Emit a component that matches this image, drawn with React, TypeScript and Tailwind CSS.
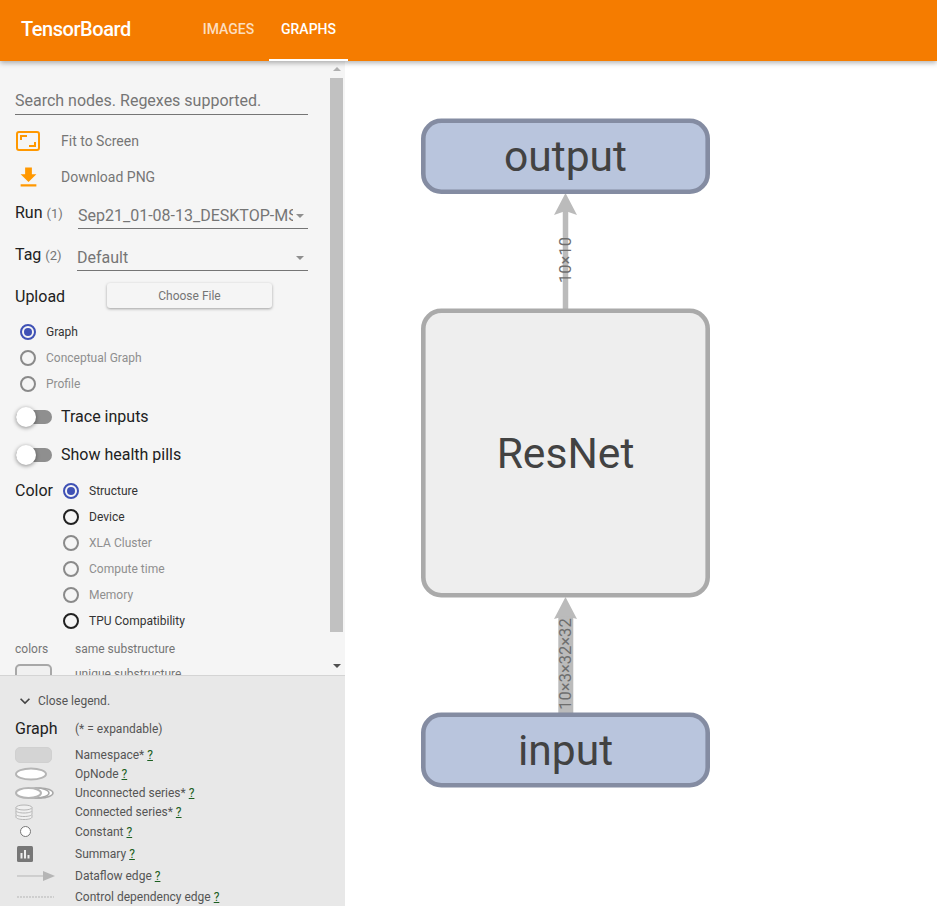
const font = "font-['Roboto',sans-serif]";

const Radio = ({ label, checked, dark, muted }: { label: string; checked?: boolean; dark?: boolean; muted?: boolean }) => (
  <div className="flex h-[26px] items-center">
    <span
      className={`flex h-4 w-4 items-center justify-center rounded-full border-2 ${
        checked ? "border-[#3f51b5]" : dark ? "border-[#212121]" : "border-[#8a8a8a]"
      }`}
    >
      {checked && <span className="h-2 w-2 rounded-full bg-[#3f51b5]" />}
    </span>
    <span className={`ml-[10px] text-xs ${muted ? "text-[#8f8f8f]" : "text-[#333]"}`}>{label}</span>
  </div>
);

const Toggle = ({ label }: { label: string }) => (
  <div className="flex h-[38px] items-center">
    <span className="relative ml-px h-[14px] w-9 rounded-full bg-[#8f8f8f]">
      <span className="absolute left-0 top-[-3px] h-5 w-5 rounded-full bg-white shadow-[0_1px_4px_rgba(0,0,0,0.45)]" />
    </span>
    <span className="ml-[9px] text-base text-[#212121]">{label}</span>
  </div>
);

const Select = ({ label, count, value, left }: { label: string; count: string; value: string; left: string }) => (
  <div className="flex h-[42px] items-start">
    <div className={`flex shrink-0 items-baseline pt-[2px] ${left}`}>
      <span className="text-base text-[#212121]">{label}</span>
      <span className="ml-1 text-[13px] text-[#757575]">{count}</span>
    </div>
    <div className="flex h-[30px] min-w-0 flex-1 items-center border-b border-[#757575] pr-1 pt-1">
      <span className="mr-[3px] min-w-0 flex-1 overflow-hidden whitespace-nowrap text-base text-[#757575]">{value}</span>
      <span className="h-0 w-0 border-x-[4px] border-t-[4px] border-x-transparent border-t-[#8f8f8f]" />
    </div>
  </div>
);

const Help = () => <a className="ml-[3px] text-[#1b5e20] underline">?</a>;

const LegendRow = ({ h, icon, label }: { h: string; icon: React.ReactNode; label: string }) => (
  <div className={`flex items-center ${h}`}>
    <div className="flex w-[60px] shrink-0 items-center">{icon}</div>
    <span className="whitespace-nowrap text-xs text-[#555]">
      {label}
      <Help />
    </span>
  </div>
);

const Node = ({ y, h, label, blue }: { y: number; h: number; label: string; blue?: boolean }) => (
  <g>
    <rect
      x={423.3}
      y={y + 2.3}
      width={284.4}
      height={h - 4.6}
      rx={18}
      fill={blue ? "#b9c5dd" : "#eeeeee"}
      stroke={blue ? "#848ca2" : "#aaaaaa"}
      strokeWidth={4.6}
    />
    <text x={565.5} y={y + h / 2 + 15} textAnchor="middle" fontSize={42.6} fill="#424242">
      {label}
    </text>
  </g>
);

export default function App() {
  return (
    <div className={`flex h-[906px] w-[937px] flex-col overflow-hidden bg-white ${font}`}>
      <header className="relative z-10 flex h-[61px] shrink-0 bg-[#f57c00] shadow-[0_2px_5px_rgba(0,0,0,0.3)]">
        <h1 className="ml-[21px] mt-[17px] w-[170px] text-xl leading-6 font-medium tracking-[-0.45px] text-white">TensorBoard</h1>
        <div className="flex h-[58px] w-[78px] items-center justify-center pr-[3px] text-sm font-medium text-white/75">IMAGES</div>
        <div className="flex h-[61px] w-[79px] items-center justify-center border-b-2 border-white pb-px text-sm font-medium text-white">GRAPHS</div>
      </header>

      <div className="flex min-h-0 flex-1">
        <aside className="flex w-[345px] shrink-0 flex-col bg-[#f5f5f5]">
          <div className="flex h-[614px] shrink-0 overflow-hidden">
            <div className="min-w-0 flex-1 px-[15px]">
              <div className="mt-[26px] flex h-7 w-[293px] items-center border-b border-[#757575] text-base text-[#757575]">
                Search nodes. Regexes supported.
              </div>
              <div className="mt-[8px] flex h-9 items-center text-sm text-[#757575]">
                <svg width="24" height="20" viewBox="0 0 24 20" fill="none" className="ml-px">
                  <rect x="1" y="1" width="22" height="18" rx="2" stroke="#ff9800" strokeWidth="2" />
                  <path d="M5 9V5h6M19 11v4h-6" stroke="#ff9800" strokeWidth="2" />
                </svg>
                <span className="ml-[21px]">Fit to Screen</span>
              </div>
              <div className="flex h-9 items-center text-sm text-[#757575]">
                <svg width="27" height="27" viewBox="0 0 24 24" fill="#ff9800">
                  <path d="M19 9h-4V3H9v6H5l7 7 7-7zM5 18v2h14v-2H5z" />
                </svg>
                <span className="ml-[19px]">Download PNG</span>
              </div>
              <div className="mt-[4px] w-[293px]">
                <Select label="Run" count="(1)" value="Sep21_01-08-13_DESKTOP-MSAJ" left="w-[63px]" />
                <Select label="Tag" count="(2)" value="Default" left="w-[62px]" />
              </div>
              <div className="flex h-[29px] items-start">
                <span className="w-[92px] pt-[2px] text-base text-[#212121]">Upload</span>
                <div className="flex h-[25px] w-[165px] items-center justify-center rounded-[3px] bg-[#f5f5f5] text-xs text-[#757575] shadow-[0_1px_3px_rgba(0,0,0,0.35)]">
                  Choose File
                </div>
              </div>
              <div className="mt-[7px] pl-[5px]">
                <Radio label="Graph" checked />
                <Radio label="Conceptual Graph" muted />
                <Radio label="Profile" muted />
              </div>
              <div className="mt-[1px]">
                <Toggle label="Trace inputs" />
                <Toggle label="Show health pills" />
              </div>
              <div className="mt-[4px] flex">
                <span className="w-[48px] pt-px text-base text-[#212121]">Color</span>
                <div>
                  <Radio label="Structure" checked />
                  <Radio label="Device" dark />
                  <Radio label="XLA Cluster" muted />
                  <Radio label="Compute time" muted />
                  <Radio label="Memory" muted />
                  <Radio label="TPU Compatibility" dark />
                </div>
              </div>
              <div className="mt-[7px] flex h-4 items-center text-xs text-[#757575]">
                <span className="w-[60px]">colors</span>
                <span>same substructure</span>
              </div>
              <div className="mt-[7px] flex text-xs text-[#757575]">
                <span className="h-4 w-[37px] rounded-[5px] border-2 border-[#a8a8a8] bg-[#f0f0f0]" />
                <span className="ml-[23px] pt-[2px]">unique substructure</span>
              </div>
            </div>
            <div className="flex w-[16px] shrink-0 flex-col items-center pl-px pr-[2px]">
              <span className="mt-[6px] h-0 w-0 border-x-[4px] border-b-[4px] border-x-transparent border-b-[#b0b0b0]" />
              <div className="mt-[7px] h-[554px] w-[13px] shrink-0 bg-[#c1c1c1]" />
              <span className="mt-[32px] h-0 w-0 border-x-[4px] border-t-[4px] border-x-transparent border-t-[#505050]" />
            </div>
          </div>

          <div className="min-h-0 flex-1 border-t border-[#d4d4d4] bg-[#e8e8e8] px-[15px]">
            <div className="mt-[16px] flex h-[18px] items-center text-xs text-[#555]">
              <svg width="20" height="20" viewBox="0 0 24 24" fill="#444" className="shrink-0">
                <path d="M16.590 8.590L12 13.170 7.410 8.590 6 10l6 6 6-6z" />
              </svg>
              <span className="ml-[3px]">Close legend.</span>
            </div>
            <div className="mt-[7px] flex h-6 items-center">
              <span className="w-[60px] text-base text-[#212121]">Graph</span>
              <span className="text-xs text-[#555]">(* = expandable)</span>
            </div>
            <div className="mt-[4px]">
              <LegendRow
                h="h-[19px]"
                label="Namespace*"
                icon={<span className="h-4 w-[37px] rounded-[5px] border border-[#d0d0d0] bg-[#d4d4d4]" />}
              />
              <LegendRow
                h="h-[19px]"
                label="OpNode"
                icon={
                  <svg width="32" height="14" viewBox="0 0 32 14">
                    <ellipse cx="16" cy="7" rx="15" ry="5.500" fill="#fff" stroke="#b5b5b5" strokeWidth="2" />
                  </svg>
                }
              />
              <LegendRow
                h="h-[19px]"
                label="Unconnected series*"
                icon={
                  <svg width="39" height="12" viewBox="0 0 39 12">
                    <ellipse cx="25" cy="6" rx="13" ry="5" fill="#fff" stroke="#a8a8a8" strokeWidth="1.500" />
                    <ellipse cx="21" cy="6" rx="13" ry="5" fill="#fff" stroke="#a8a8a8" strokeWidth="1.500" />
                    <ellipse cx="13.500" cy="6" rx="12.500" ry="5" fill="#fff" stroke="#b5b5b5" strokeWidth="2" />
                  </svg>
                }
              />
              <LegendRow
                h="h-[19px]"
                label="Connected series*"
                icon={
                  <svg width="18" height="16" viewBox="0 0 18 16" fill="#f0f0f0" stroke="#b5b5b5">
                    <path d="M1 11v2c0 1.500 3.500 2.500 8 2.500s8-1 8-2.500v-2" />
                    <path d="M1 7v3c0 1.500 3.500 2.500 8 2.500s8-1 8-2.500V7" />
                    <path d="M1 3.500v3C1 8 4.500 9 9 9s8-1 8-2.500v-3" />
                    <ellipse cx="9" cy="3.500" rx="8" ry="2.500" />
                  </svg>
                }
              />
              <LegendRow
                h="h-[21px]"
                label="Constant"
                icon={<span className="ml-[5px] h-[11px] w-[11px] rounded-full border border-[#777] bg-white" />}
              />
              <LegendRow
                h="h-[23px]"
                label="Summary"
                icon={
                  <svg width="16" height="16" viewBox="0 0 16 16" className="ml-[2px]">
                    <rect width="16" height="16" rx="1.500" fill="#777" />
                    <path d="M3.500 7h2v5.500h-2zM7 4h2v8.500H7zM10.500 9h2v3.500h-2z" fill="#eee" />
                  </svg>
                }
              />
              <LegendRow
                h="h-[21px]"
                label="Dataflow edge"
                icon={
                  <svg width="38" height="12" viewBox="0 0 38 12" className="ml-[2px]">
                    <path d="M0 6h28" stroke="#b5b5b5" strokeWidth="1" />
                    <path d="M26 1l12 5-12 5z" fill="#b5b5b5" />
                  </svg>
                }
              />
              <LegendRow
                h="h-[21px]"
                label="Control dependency edge"
                icon={
                  <svg width="38" height="4" viewBox="0 0 38 4" className="ml-[2px]">
                    <path d="M0 2h37" stroke="#b5b5b5" strokeWidth="1" strokeDasharray="2 1" />
                  </svg>
                }
              />
            </div>
          </div>
        </aside>

        <main className="min-w-0 flex-1">
          <svg width="592" height="845" viewBox="345 61 592 845" className="block" style={{ fontFamily: "Roboto, sans-serif" }}>
            <path d="M565.500 210v99" stroke="#bbbbbb" strokeWidth="5.500" />
            <path d="M565.500 193l11.500 22-11.500-4-11.500 4z" fill="#bbbbbb" />
            <path d="M565.800 615v98" stroke="#bbbbbb" strokeWidth="15" />
            <path d="M565.500 597l11.500 22-11.500-3-11.500 3z" fill="#bbbbbb" />
            <text x={571} y={260} fontSize={16.5} fill="#6e6e6e" textAnchor="middle" transform="rotate(-90 571 260)">
              10×10
            </text>
            <text x={571} y={664} fontSize={16.5} fill="#6e6e6e" textAnchor="middle" transform="rotate(-90 571 664)">
              10×3×32×32
            </text>
            <Node y={118.5} h={75.5} label="output" blue />
            <Node y={308.5} h={289} label="ResNet" />
            <Node y={712.5} h={75} label="input" blue />
          </svg>
        </main>
      </div>
    </div>
  );
}
